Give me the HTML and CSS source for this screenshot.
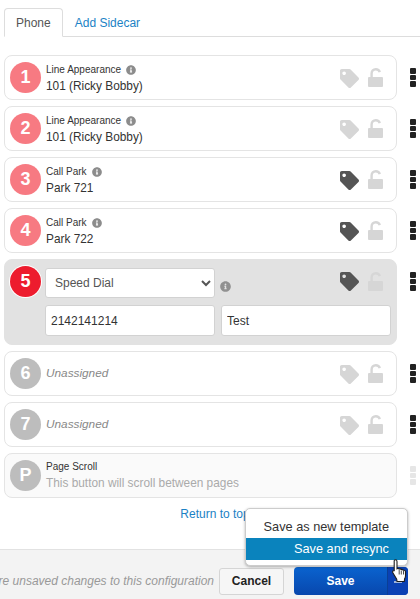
FILE: index.html
```html
<!DOCTYPE html>
<html>
<head>
  <title>Phone configuration</title>
  <link rel="stylesheet" href="styles.css">
</head>
<body>
  <svg class="defs" width="0" height="0">
    <symbol id="tag" viewBox="0 0 512 512"><path d="M0 252.118V48C0 21.49 21.49 0 48 0h204.118a48 48 0 0 1 33.941 14.059l211.882 211.882c18.745 18.745 18.745 49.137 0 67.882L293.823 497.941c-18.745 18.745-49.137 18.745-67.882 0L14.059 286.059A48 48 0 0 1 0 252.118zM112 64c-26.51 0-48 21.49-48 48s21.49 48 48 48 48-21.49 48-48-21.49-48-48-48z"/></symbol>
    <symbol id="unlock" viewBox="0 0 15 19"><rect x="0" y="9" width="15" height="10" rx="1"/><path d="M3.600 9.500V5.500C3.600 3 5.300 1.300 7.800 1.300c1.900 0 3.400 1 4 2.900" fill="none" stroke-width="2.400"/></symbol>
    <symbol id="info" viewBox="0 0 512 512"><path d="M256 8C119.043 8 8 119.083 8 256c0 136.997 111.043 248 248 248s248-111.003 248-248C504 119.083 392.957 8 256 8zm0 110c23.196 0 42 18.804 42 42s-18.804 42-42 42-42-18.804-42-42 18.804-42 42-42zm56 254c0 6.627-5.373 12-12 12h-88c-6.627 0-12-5.373-12-12v-24c0-6.627 5.373-12 12-12h12v-64h-12c-6.627 0-12-5.373-12-12v-24c0-6.627 5.373-12 12-12h64c6.627 0 12 5.373 12 12v100h12c6.627 0 12 5.373 12 12v24z"/></symbol>
  </svg>

  <div class="main">
    <div class="tabs">
      <a class="tab active">Phone</a>
      <a class="tab">Add Sidecar</a>
    </div>

    <div class="lines">
      <div class="line">
        <div class="card">
          <span class="badge">1</span>
          <div class="info">
            <div class="label">Line Appearance <svg class="i"><use href="#info"/></svg></div>
            <div class="value">101 (Ricky Bobby)</div>
          </div>
          <svg class="tag"><use href="#tag"/></svg>
          <svg class="lock"><use href="#unlock"/></svg>
        </div>
        <div class="handle"><b></b><b></b><b></b></div>
      </div>

      <div class="line">
        <div class="card">
          <span class="badge">2</span>
          <div class="info">
            <div class="label">Line Appearance <svg class="i"><use href="#info"/></svg></div>
            <div class="value">101 (Ricky Bobby)</div>
          </div>
          <svg class="tag"><use href="#tag"/></svg>
          <svg class="lock"><use href="#unlock"/></svg>
        </div>
        <div class="handle"><b></b><b></b><b></b></div>
      </div>

      <div class="line">
        <div class="card">
          <span class="badge">3</span>
          <div class="info">
            <div class="label">Call Park <svg class="i"><use href="#info"/></svg></div>
            <div class="value">Park 721</div>
          </div>
          <svg class="tag on"><use href="#tag"/></svg>
          <svg class="lock"><use href="#unlock"/></svg>
        </div>
        <div class="handle"><b></b><b></b><b></b></div>
      </div>

      <div class="line">
        <div class="card">
          <span class="badge">4</span>
          <div class="info">
            <div class="label">Call Park <svg class="i"><use href="#info"/></svg></div>
            <div class="value">Park 722</div>
          </div>
          <svg class="tag on"><use href="#tag"/></svg>
          <svg class="lock"><use href="#unlock"/></svg>
        </div>
        <div class="handle"><b></b><b></b><b></b></div>
      </div>

      <div class="line">
        <div class="card editing">
          <span class="badge">5</span>
          <div class="edit">
            <div class="edit-top">
              <select class="type"><option>Speed Dial</option></select>
              <svg class="i big"><use href="#info"/></svg>
              <svg class="tag on"><use href="#tag"/></svg>
              <svg class="lock"><use href="#unlock"/></svg>
            </div>
            <div class="edit-fields">
              <input class="field" value="2142141214">
              <input class="field" value="Test">
            </div>
          </div>
        </div>
        <div class="handle"><b></b><b></b><b></b></div>
      </div>

      <div class="line">
        <div class="card">
          <span class="badge grey">6</span>
          <div class="info"><div class="empty">Unassigned</div></div>
          <svg class="tag"><use href="#tag"/></svg>
          <svg class="lock"><use href="#unlock"/></svg>
        </div>
        <div class="handle"><b></b><b></b><b></b></div>
      </div>

      <div class="line">
        <div class="card">
          <span class="badge grey">7</span>
          <div class="info"><div class="empty">Unassigned</div></div>
          <svg class="tag"><use href="#tag"/></svg>
          <svg class="lock"><use href="#unlock"/></svg>
        </div>
        <div class="handle"><b></b><b></b><b></b></div>
      </div>

      <div class="line">
        <div class="card fixed">
          <span class="badge grey">P</span>
          <div class="info">
            <div class="label">Page Scroll</div>
            <div class="value muted">This button will scroll between pages</div>
          </div>
        </div>
        <div class="handle faint"><b></b><b></b><b></b></div>
      </div>
    </div>

    <div class="return"><a>Return to top</a></div>
  </div>

  <div class="footer">
    <span class="unsaved">There are unsaved changes to this configuration</span>
    <button class="cancel">Cancel</button>
    <div class="save">
      <span class="save-main">Save</span>
      <span class="save-caret"><i></i></span>
    </div>

    <div class="save-menu">
      <div class="save-item">Save as new template</div>
      <div class="save-item selected">Save and resync</div>
    </div>
    <svg class="cursor" viewBox="0 0 15 24"><path d="M3.500.8c.9 0 1.500.7 1.500 1.700v7.300c.7-.5 1.700-.4 2.100.3.700-.5 1.700-.3 2.100.5.800-.4 1.700-.1 2 .6.900-.3 2.300.3 2.300 1.600v4.200c0 1.200-.4 2-.9 2.800l-.3 2.700H5l-.3-2.300L1 14c-.6-.8-.5-1.800.2-2.300.6-.4 1.300-.3 1 .3V2.500C2 1.500 2.600.8 3.500.8z" fill="#fff" stroke="#1d1d1d" stroke-width="1.100"/><path d="M7.200 11v4.500M9.300 11.500v4M11.500 12v3.500" stroke="#1d1d1d" stroke-width=".8" fill="none"/></svg>
  </div>
</body>
</html>
```

FILE: styles.css
```css
* {
  box-sizing: border-box;
}

html, body {
  height: 599px;
}

body {
  margin: 0;
  display: flex;
  flex-direction: column;
  overflow: hidden;
  background-color: #fff;
  font-family: "Liberation Sans", Arial, sans-serif;
  font-size: 12px;
  color: #333;
}

.defs {
  position: absolute;
}

.main {
  flex: 1;
  padding-top: 8px;
}

/* Tabs */
.tabs {
  display: flex;
  height: 29px;
  margin-left: 4px;
  border-bottom: 1px solid #ddd;
}

.tab {
  height: 29px;
  padding: 7px 11px 0;
  font-size: 12px;
  color: #1b82c5;
  border: 1px solid transparent;
}

.tab.active {
  color: #555;
  background-color: #fff;
  border: 1px solid #ddd;
  border-bottom-color: #fff;
  border-radius: 4px 4px 0 0;
}

/* Line keys */
.lines {
  display: flex;
  flex-direction: column;
  gap: 6px;
  margin-top: 18px;
  padding-left: 4px;
}

.line {
  display: flex;
  align-items: flex-start;
}

.card {
  display: flex;
  align-items: center;
  width: 393px;
  height: 45px;
  padding: 0 13px 0 5px;
  border: 1px solid #e4e4e4;
  border-radius: 8px;
  background-color: #fff;
}

.card.fixed {
  background-color: #fafafa;
}

.card.editing {
  height: 86px;
  align-items: flex-start;
  padding: 6px 5px 0 5px;
  border-color: #e2e2e2;
  background-color: #e2e2e2;
}

.badge {
  flex: none;
  display: flex;
  align-items: center;
  justify-content: center;
  width: 31px;
  height: 31px;
  margin-right: 5px;
  border-radius: 50%;
  background-color: #f77a82;
  font-size: 18px;
  font-weight: bold;
  color: #fff;
}

.badge.grey {
  background-color: #bdbdbd;
}

.editing .badge {
  margin-right: 4px;
  background-color: #ed1c2e;
  box-shadow: 0 0 0 1px #fff;
}

.info {
  flex: 1;
  min-width: 0;
  padding-top: 2px;
}

.fixed .info {
  padding-top: 0;
}

.label {
  display: flex;
  align-items: center;
  gap: 5px;
  font-size: 10px;
  line-height: 14px;
  color: #333;
}

.value {
  margin-top: 2px;
  font-size: 11.85px;
  line-height: 15px;
  color: #333;
}

.value.muted {
  color: #aaa;
}

.empty {
  margin-bottom: 3px;
  font-size: 11.8px;
  font-style: italic;
  color: #888;
}

.i {
  width: 10px;
  height: 10px;
  fill: #8c8c8c;
}

.i.big {
  width: 11px;
  height: 11px;
  flex: none;
  fill: #919191;
}

.tag {
  flex: none;
  width: 19px;
  height: 19px;
  margin-top: 1px;
  fill: #d6d6d6;
}

.tag.on {
  fill: #555;
}

.lock {
  flex: none;
  width: 15px;
  height: 19px;
  margin-left: 9px;
  fill: #d6d6d6;
  stroke: #d6d6d6;
  stroke-width: 0;
}

.handle {
  display: flex;
  flex-direction: column;
  gap: 1px;
  margin: 13px 0 0 13px;
}

.handle b {
  display: block;
  width: 6px;
  height: 5.5px;
  border-radius: 1px;
  background-color: #222;
}

.handle.faint b {
  background-color: #e6e6e6;
}

/* Editing row */
.edit {
  flex: 1;
  margin-top: 2px;
}

.edit-top {
  display: flex;
  align-items: flex-start;
  height: 37px;
}

.edit-top .i {
  margin: 13px auto 0 5px;
}

.edit-top .tag {
  margin-top: 4px;
}

.edit-top .lock {
  margin: 4px 8px 0 9px;
}

.type {
  width: 170px;
  height: 30px;
  padding: 0 5px;
  border: 1px solid #d2d2d2;
  border-radius: 3px;
  background-color: #fff;
  font-family: inherit;
  font-size: 12px;
  color: #555;
}

.edit-fields {
  display: flex;
  gap: 6px;
}

.field {
  width: 170px;
  height: 31px;
  padding: 0 5px;
  border: 1px solid #d2d2d2;
  border-radius: 3px;
  background-color: #fff;
  font-family: inherit;
  font-size: 12px;
  color: #333;
}

.return {
  margin-top: 9px;
  padding-left: 10px;
  text-align: center;
}

.return a {
  color: #1b82c5;
}

/* Footer */
.footer {
  position: relative;
  flex: none;
  display: flex;
  align-items: center;
  justify-content: flex-end;
  height: 50px;
  padding: 13px 12px 0 0;
  border-top: 1px solid #e2e2e2;
  background-color: #f3f3f3;
  white-space: nowrap;
}

.unsaved {
  font-style: italic;
  color: #999;
  margin-right: 5px;
}

.cancel {
  flex: none;
  width: 65px;
  height: 27px;
  margin-right: 10px;
  border: 1px solid #d5d5d5;
  border-radius: 3px;
  background-color: #f6f6f6;
  font-family: inherit;
  font-size: 12px;
  font-weight: bold;
  color: #222;
}

.save {
  flex: none;
  display: flex;
  width: 114px;
  height: 28px;
  border-radius: 4px;
  overflow: hidden;
  background-image: linear-gradient(#0a63cf, #0847ad);
}

.save-main {
  width: 93px;
  line-height: 28px;
  text-align: center;
  font-size: 12px;
  font-weight: bold;
  color: #fff;
}

.save-caret {
  flex: 1;
  display: flex;
  justify-content: center;
  padding-top: 14px;
  border-left: 1px solid #0a3f96;
  background-color: #0a41b4;
}

.save-caret i {
  display: block;
  width: 8px;
  height: 2px;
  background-color: #9db4dc;
}

.save-menu {
  position: absolute;
  right: 12px;
  top: -42px;
  width: 163px;
  height: 58px;
  padding-top: 6px;
  border: 1px solid #ccc;
  border-radius: 5px;
  background-color: #fff;
  box-shadow: 0 1px 3px rgba(0, 0, 0, 0.3);
}

.save-item {
  height: 23px;
  padding-right: 18px;
  line-height: 23px;
  text-align: right;
  font-size: 12.75px;
  color: #333;
}

.save-item.selected {
  height: 22px;
  line-height: 22px;
  background-color: #0a83bd;
  color: #fff;
}

.cursor {
  position: absolute;
  left: 392px;
  top: 9px;
  width: 15px;
  height: 24px;
}
```
